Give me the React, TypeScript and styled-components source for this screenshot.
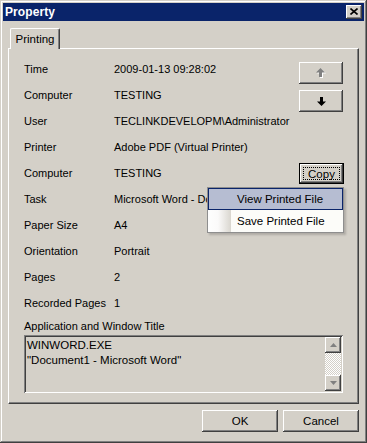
import React from "react";
import styled, { createGlobalStyle } from "styled-components";

const Global = createGlobalStyle`
  html, body { margin: 0; padding: 0; background: #d4d0c8; }
  body { font-family: "Liberation Sans", Arial, sans-serif; font-size: 11px; color: #000; }
  * { box-sizing: border-box; }
`;

const raised = `
  box-shadow: inset -1px -1px #404040, inset 1px 1px #ffffff, inset -2px -2px #808080, inset 2px 2px #d4d0c8;
`;

const Window = styled.div`
  width: 367px;
  height: 443px;
  background: #d4d0c8;
  padding: 3px;
  box-shadow: inset -1px -1px #404040, inset 1px 1px #d4d0c8, inset -2px -2px #808080, inset 2px 2px #ffffff;
  display: flex;
  flex-direction: column;
`;

const TitleBar = styled.div`
  height: 18px;
  background: #0a246a;
  display: flex;
  align-items: center;
  justify-content: space-between;
  padding: 0 2px 0 2px;
`;

const Title = styled.span`
  color: #fff;
  font-weight: bold;
  font-size: 12px;
  letter-spacing: 0.1px;
`;

const CloseButton = styled.div`
  width: 16px;
  height: 14px;
  background: #d4d0c8;
  ${raised}
  display: flex;
  align-items: center;
  justify-content: center;
  padding-bottom: 1px;
`;

const Body = styled.div`
  flex: 1;
  display: flex;
  flex-direction: column;
  padding: 7px 5px 0 5px;
`;

const TabStrip = styled.div`
  display: flex;
  padding-left: 2px;
  position: relative;
  z-index: 2;
  margin-bottom: -1px;
`;

const Tab = styled.div`
  width: 50px;
  height: 21px;
  background: #d4d0c8;
  border-top: 1px solid #fff;
  border-left: 1px solid #fff;
  border-right: 1px solid #404040;
  border-top-left-radius: 2px;
  border-top-right-radius: 2px;
  box-shadow: inset -1px 0 #808080;
  display: flex;
  align-items: center;
  justify-content: center;
  padding-bottom: 1px;
  font-size: 11.5px;
`;

const Panel = styled.div`
  border-top: 1px solid #fff;
  border-left: 1px solid #fff;
  border-right: 1px solid #404040;
  border-bottom: 1px solid #404040;
  box-shadow: inset -1px -1px #808080;
  padding: 7px 15px 10px 15px;
  display: flex;
  flex-direction: column;
`;

const Grid = styled.div`
  display: grid;
  grid-template-columns: 90px 1fr 44px;
  grid-auto-rows: 26px;
  align-items: center;
`;

const Label = styled.div`
  white-space: nowrap;
`;

const Value = styled.div`
  white-space: nowrap;
  overflow: visible;
`;

const Cell = styled.div<{ $top: number }>`
  align-self: start;
  margin-top: ${(p) => p.$top}px;
  position: relative;
`;

const Button = styled.div<{ $w?: number; $h?: number }>`
  width: ${(p) => p.$w ?? 44}px;
  height: ${(p) => p.$h ?? 22}px;
  background: #d4d0c8;
  ${raised}
  display: flex;
  align-items: center;
  justify-content: center;
  font-size: 11.5px;
`;

const DefaultButton = styled.div`
  width: 45px;
  height: 21px;
  background: #d4d0c8;
  border: 1px solid #000;
  box-shadow: inset -1px -1px #404040, inset 1px 1px #ffffff, inset -2px -2px #808080;
  display: flex;
  align-items: center;
  justify-content: center;
  padding: 3px;
  font-size: 11.5px;
`;

const Focus = styled.div`
  flex: 1;
  align-self: stretch;
  border: 1px dotted #000;
  display: flex;
  align-items: center;
  justify-content: center;
`;

const Menu = styled.div`
  position: absolute;
  top: 24px;
  right: -1px;
  width: 137px;
  background: #fcfcf9;
  border: 1px solid #8e8e8e;
  padding: 0;
  z-index: 5;
  box-shadow: 2px 2px 2px rgba(0, 0, 0, 0.18);
  display: flex;
  flex-direction: column;
`;

const MenuItem = styled.div<{ $active?: boolean }>`
  height: 22px;
  display: flex;
  align-items: center;
  padding-left: ${(p) => (p.$active ? 28 : 29)}px;
  white-space: nowrap;
  font-size: 11.5px;
  background: ${(p) =>
    p.$active
      ? "#b6bdd2"
      : "linear-gradient(to right, #fefefe 0px, #fbfafa 10px, #d9d6cf 23px, #fcfcf9 23px)"};
  border: ${(p) => (p.$active ? "1px solid #0a246a" : "none")};
`;

const SectionLabel = styled.div`
  margin-top: 3px;
  height: 14px;
  line-height: 14px;
`;

const TextBox = styled.div`
  margin-top: 2px;
  height: 58px;
  display: flex;
  background: #d4d0c8;
  padding: 2px;
  box-shadow: inset 1px 1px #808080, inset -1px -1px #ffffff, inset 2px 2px #404040, inset -2px -2px #d4d0c8;
`;

const TextContent = styled.div`
  flex: 1;
  padding: 1px 1px;
  line-height: 15px;
  font-size: 11.5px;
`;

const ScrollBar = styled.div`
  width: 16px;
  display: flex;
  flex-direction: column;
`;

const ScrollArrow = styled.div`
  width: 16px;
  height: 16px;
  background: #d4d0c8;
  ${raised}
  display: flex;
  align-items: center;
  justify-content: center;
`;

const Track = styled.div`
  flex: 1;
  background: repeating-conic-gradient(#ffffff 0 25%, #d4d0c8 0 50%) 0 0 / 2px 2px;
`;

const Footer = styled.div`
  display: flex;
  justify-content: flex-end;
  gap: 5px;
  margin-top: 6px;
`;

const Close = () => (
  <svg width="8" height="7" viewBox="0 0 8 7">
    <path d="M0.5 0.5 L7.5 6.5 M7.5 0.5 L0.5 6.5" stroke="#000" strokeWidth="1.6" />
  </svg>
);

const UpArrow = () => (
  <svg width="10" height="10" viewBox="0 0 10 10">
    <polygon points="5.5,1 10,5.5 7,5.5 7,10 4,10 4,5.5 1,5.5" fill="#fff" />
    <polygon points="4.5,0 9,4.5 6,4.5 6,9 3,9 3,4.5 0,4.5" fill="#808080" />
  </svg>
);

const DownArrow = () => (
  <svg width="9" height="9" viewBox="0 0 9 9">
    <polygon points="3,0 6,0 6,4.5 9,4.5 4.5,9 0,4.5 3,4.5" fill="#000" />
  </svg>
);

const Tri = ({ up }: { up?: boolean }) => (
  <svg width="7" height="4" viewBox="0 0 7 4">
    <polygon points={up ? "3.5,0 7,4 0,4" : "0,0 7,0 3.5,4"} fill="#808080" />
  </svg>
);

const rows: [string, string][] = [
  ["Time", "2009-01-13 09:28:02"],
  ["Computer", "TESTING"],
  ["User", "TECLINKDEVELOPM\\Administrator"],
  ["Printer", "Adobe PDF (Virtual Printer)"],
  ["Computer", "TESTING"],
  ["Task", "Microsoft Word - Document1"],
  ["Paper Size", "A4"],
  ["Orientation", "Portrait"],
  ["Pages", "2"],
  ["Recorded Pages", "1"],
];

export default function App() {
  return (
    <>
      <Global />
      <Window>
        <TitleBar>
          <Title>Property</Title>
          <CloseButton>
            <Close />
          </CloseButton>
        </TitleBar>
        <Body>
          <TabStrip>
            <Tab>Printing</Tab>
          </TabStrip>
          <Panel>
            <Grid>
              {rows.map(([l, v], i) => (
                <React.Fragment key={i}>
                  <Label>{l}</Label>
                  <Value>{v}</Value>
                  {i === 0 ? (
                    <Cell $top={6}>
                      <Button>
                        <UpArrow />
                      </Button>
                    </Cell>
                  ) : i === 1 ? (
                    <Cell $top={8}>
                      <Button>
                        <DownArrow />
                      </Button>
                    </Cell>
                  ) : i === 4 ? (
                    <Cell $top={3}>
                      <DefaultButton>
                        <Focus>Copy</Focus>
                      </DefaultButton>
                      <Menu>
                        <MenuItem $active>View Printed File</MenuItem>
                        <MenuItem>Save Printed File</MenuItem>
                      </Menu>
                    </Cell>
                  ) : (
                    <div />
                  )}
                </React.Fragment>
              ))}
            </Grid>
            <SectionLabel>Application and Window Title</SectionLabel>
            <TextBox>
              <TextContent>
                WINWORD.EXE
                <br />
                "Document1 - Microsoft Word"
              </TextContent>
              <ScrollBar>
                <ScrollArrow>
                  <Tri up />
                </ScrollArrow>
                <Track />
                <ScrollArrow>
                  <Tri />
                </ScrollArrow>
              </ScrollBar>
            </TextBox>
          </Panel>
          <Footer>
            <Button $w={76} $h={22}>OK</Button>
            <Button $w={76} $h={22}>Cancel</Button>
          </Footer>
        </Body>
      </Window>
    </>
  );
}
